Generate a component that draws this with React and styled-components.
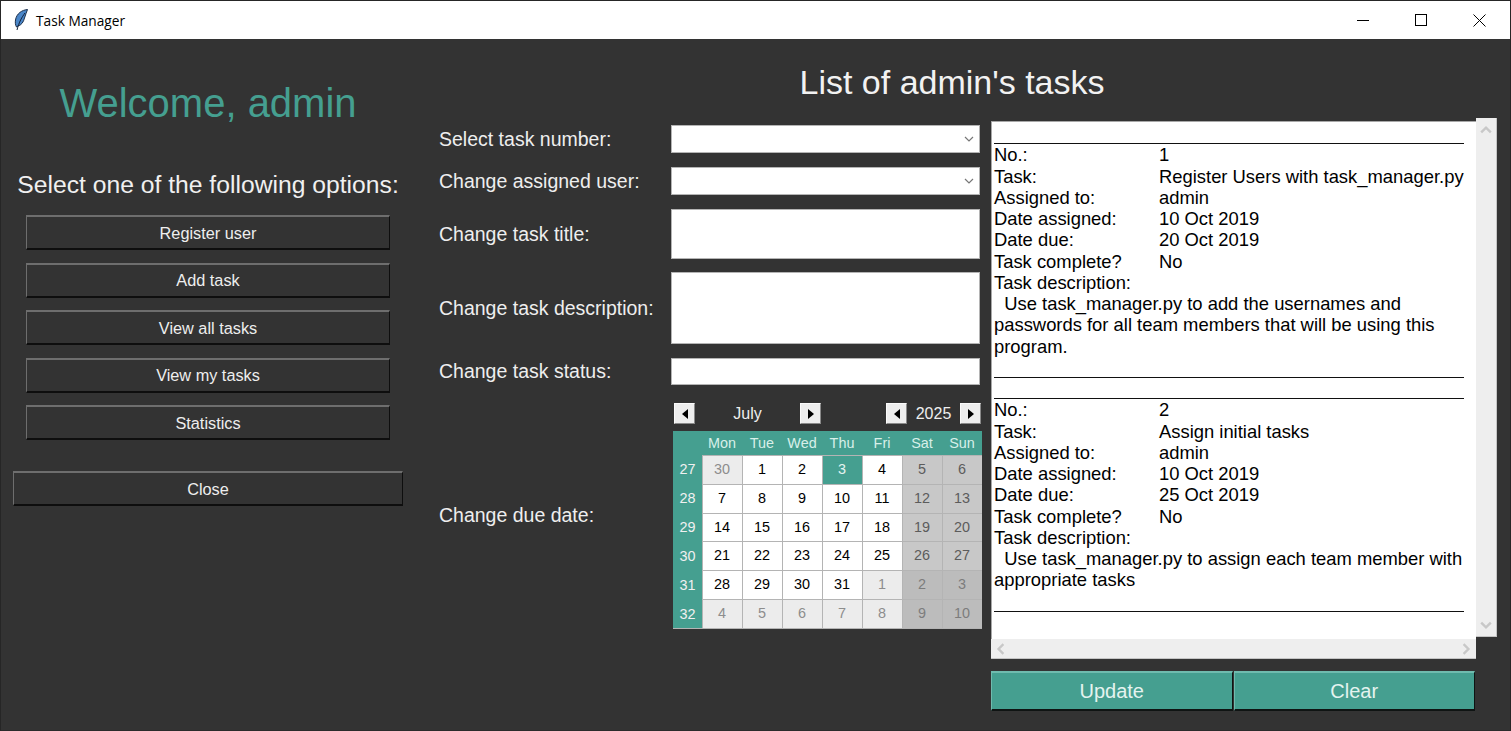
import styled, { createGlobalStyle } from "styled-components";

const teal = "#459f90";
const tasks = [
  {
    no: "1",
    task: "Register Users with task_manager.py",
    assigned: "10 Oct 2019",
    due: "20 Oct 2019",
    description: "  Use task_manager.py to add the usernames and passwords for all team members that will be using this program.",
  },
  {
    no: "2",
    task: "Assign initial tasks",
    assigned: "10 Oct 2019",
    due: "25 Oct 2019",
    description: "  Use task_manager.py to assign each team member with appropriate tasks",
  },
];
const days = ["Mon", "Tue", "Wed", "Thu", "Fri", "Sat", "Sun"];
const weeks = [
  { no: 27, first: 30 },
  { no: 28, first: 7 },
  { no: 29, first: 14 },
  { no: 30, first: 21 },
  { no: 31, first: 28 },
  { no: 32, first: 4 },
];

const GlobalStyle = createGlobalStyle`
  html, body {
    margin: 0;
    padding: 0;
    background: #333333;
    overflow: hidden;
  }
  * {
    box-sizing: border-box;
  }
`;

const Window = styled.div`
  width: 1511px;
  height: 731px;
  display: flex;
  flex-direction: column;
  border: 1px solid #262626;
  border-bottom-color: #2b2b2b;
  background: #333333;
  font-family: "Liberation Sans", Arial, sans-serif;
  color: #eeeeee;
  overflow: hidden;
`;

const TitleBar = styled.div`
  height: 38px;
  flex: none;
  display: flex;
  align-items: center;
  background: #ffffff;
  color: #000000;
  padding-left: 13px;
`;

const AppName = styled.span`
  font-family: "Open Sans", sans-serif;
  font-size: 13.7px;
  margin-left: 8px;
`;

const Controls = styled.div`
  margin-left: auto;
  margin-right: 1px;
  display: flex;
`;

const ControlButton = styled.div`
  width: 58.5px;
  height: 38px;
  display: flex;
  align-items: center;
  justify-content: center;
`;

const Main = styled.div`
  flex: 1;
  display: flex;
`;

const Sidebar = styled.div`
  width: 414px;
  flex: none;
  display: flex;
  flex-direction: column;
  align-items: center;
  padding-top: 41px;
`;

const Welcome = styled.h1`
  margin: 0;
  font-size: 40px;
  line-height: 46px;
  font-weight: 400;
  color: ${teal};
`;

const Prompt = styled.h2`
  margin: 44px 0 15px;
  font-size: 24.7px;
  line-height: 30px;
  font-weight: 400;
  color: #f0f0f0;
`;

const MenuList = styled.div`
  display: flex;
  flex-direction: column;
  gap: 12.5px;
`;

const MenuButton = styled.button`
  width: ${(p) => p.$width}px;
  height: 35px;
  margin-top: ${(p) => p.$top || 0}px;
  padding: 1px 0 0;
  background: #333333;
  color: #eeeeee;
  font-family: inherit;
  font-size: 16.3px;
  border: 1px solid;
  border-top: 2px solid #6e6e6e;
  border-left-color: #6e6e6e;
  border-right-color: #0e0e0e;
  border-bottom: 2px solid #0e0e0e;
`;

const Content = styled.div`
  flex: 1;
  padding: 23px 0 0 24px;
`;

const PageTitle = styled.h1`
  margin: 0 0 16px;
  width: 1026px;
  text-align: center;
  font-size: 34px;
  line-height: 40px;
  font-weight: 400;
  color: #f2f2f2;
`;

const Columns = styled.div`
  display: flex;
  gap: 9px;
`;

const Form = styled.div`
  width: 543px;
  padding-top: 7px;
  display: flex;
  flex-direction: column;
`;

const FormRow = styled.div`
  display: flex;
  align-items: center;
  margin-top: ${(p) => p.$top || 0}px;
`;

const Label = styled.label`
  width: 232px;
  flex: none;
  font-size: 19.5px;
  color: #eeeeee;
`;

const Field = styled.div`
  width: 309px;
  height: ${(p) => p.$height}px;
  display: flex;
  align-items: center;
  justify-content: flex-end;
  padding-right: 5px;
  background: #ffffff;
  border: 1px solid #b4b4b4;
`;

const CalendarWrap = styled.div`
  width: 309px;
  margin-left: 2px;
`;

const CalendarNav = styled.div`
  display: flex;
  justify-content: space-between;
  padding: 0 1px;
  margin-bottom: 7px;
`;

const NavGroup = styled.div`
  display: flex;
  align-items: center;
`;

const NavLabel = styled.span`
  width: ${(p) => p.$width}px;
  padding-top: 1px;
  text-align: center;
  font-size: 16px;
  color: #eeeeee;
`;

const NavButton = styled.div`
  width: 21px;
  height: 21px;
  display: flex;
  align-items: center;
  justify-content: center;
  background: #eeeeee;
  border: 1px solid;
  border-color: #fbfbfb #8a8a8a #8a8a8a #fbfbfb;
`;

const Arrow = styled.span`
  width: 0;
  height: 0;
  border-top: 5px solid transparent;
  border-bottom: 5px solid transparent;
  border-left: ${(p) => (p.$right ? "6px solid #000" : "0")};
  border-right: ${(p) => (p.$right ? "0" : "6px solid #000")};
`;

const CalendarGrid = styled.div`
  display: grid;
  grid-template-columns: 29px repeat(7, 40px);
  grid-template-rows: 24px repeat(6, 28.83px);
  background: ${teal};
  border-bottom: 1px solid #b4b4b4;
  font-size: 14.4px;
`;

const HeadCell = styled.div`
  display: flex;
  align-items: center;
  justify-content: center;
  color: #d8efe9;
`;

const WeekCell = styled(HeadCell)`
  color: #f0f0f0;
`;

const dayBackground = (p) => {
  if (p.$selected) return teal;
  if (p.$weekend) return p.$other ? "#bcbcbc" : "#c8c8c8";
  return p.$other ? "#ececec" : "#ffffff";
};

const dayColor = (p) => {
  if (p.$selected) return "#e6f4f1";
  if (p.$other) return p.$weekend ? "#7c7c7c" : "#8d8d8d";
  return p.$weekend ? "#5c5c5c" : "#000000";
};

const DayCell = styled.div`
  display: flex;
  align-items: center;
  justify-content: center;
  padding: 0 1px 2px 0;
  border-top: 1px solid #b4b4b4;
  border-left: 1px solid #b4b4b4;
  background: ${dayBackground};
  color: ${dayColor};
`;

const Output = styled.div`
  display: grid;
  grid-template-columns: 485px 21px;
`;

const TextPanel = styled.div`
  height: 518px;
  margin-top: 3px;
  padding: 1px 4px 0 2px;
  background: #ffffff;
  border-top: 1px solid #a8a8a8;
  border-left: 1px solid #a8a8a8;
  color: #000000;
  font-size: 18.4px;
  line-height: 21.25px;
  overflow: hidden;
`;

const Rule = styled.div`
  height: 21.25px;
  width: 470px;
  border-bottom: 1px solid #111111;
`;

const InfoRow = styled.div`
  display: grid;
  grid-template-columns: 165px 1fr;
`;

const Description = styled.div`
  white-space: pre-wrap;
`;

const BlankLine = styled.div`
  height: 21.25px;
`;

const VerticalBar = styled.div`
  height: 519px;
  display: flex;
  flex-direction: column;
  align-items: center;
  justify-content: space-between;
  padding: 6px 0 5px;
  background: #eeeeee;
  border-right: 1px solid #c4c4c4;
  border-bottom: 1px solid #c4c4c4;
`;

const HorizontalBar = styled.div`
  height: 20px;
  display: flex;
  align-items: center;
  justify-content: space-between;
  padding: 0 4px;
  background: #eeeeee;
  border-bottom: 1px solid #c4c4c4;
`;

const ActionRow = styled.div`
  grid-column: 1;
  display: flex;
  gap: 1px;
  margin-top: 12px;
  padding-right: 1px;
`;

const ActionButton = styled.button`
  flex: 1;
  height: 40px;
  padding: 1px 0 0;
  background: ${teal};
  color: #e4f3ef;
  font-family: inherit;
  font-size: 20px;
  border: 1px solid;
  border-top: 2px solid #6fbbae;
  border-left-color: #6fbbae;
  border-right-color: #0f1413;
  border-bottom: 2px solid #0f1413;
`;

const Feather = () => (
  <svg width="14" height="22" viewBox="0 0 14 22">
    <path d="M13.500 .5C8 1 2.500 4.500 1.500 11c-.4 2.500-.2 5 1 7l1.500-1c3.500-1 5.500-4 6.500-8 1-3 2-6 3-8.500z" fill="#4a86c8" stroke="#1c2f4a" strokeWidth="1" />
    <path d="M11 4C8 8 5 13 3 21" fill="none" stroke="#10203a" strokeWidth="1" />
  </svg>
);

const Chevron = ({ size = 10, rotate = 0, color = "#777", weight = 1.2 }) => (
  <svg width={size} height={size} viewBox="0 0 10 10" style={{ transform: `rotate(${rotate}deg)` }}>
    <path d="M1 3l4 4 4-4" fill="none" stroke={color} strokeWidth={weight} />
  </svg>
);

const TaskBlock = ({ item }) => (
  <>
    <InfoRow><span>No.:</span><span>{item.no}</span></InfoRow>
    <InfoRow><span>Task:</span><span>{item.task}</span></InfoRow>
    <InfoRow><span>Assigned to:</span><span>admin</span></InfoRow>
    <InfoRow><span>Date assigned:</span><span>{item.assigned}</span></InfoRow>
    <InfoRow><span>Date due:</span><span>{item.due}</span></InfoRow>
    <InfoRow><span>Task complete?</span><span>No</span></InfoRow>
    <InfoRow><span>Task description:</span></InfoRow>
    <Description>{item.description}</Description>
  </>
);

const WeekRow = ({ week, row }) => {
  const cells = [];
  for (let i = 0; i < 7; i++) {
    // july 2025 has 31 days, june 30
    let n = week.first + i;
    let other = row === 5;
    if (row === 0) {
      n = i === 0 ? 30 : i;
      other = i === 0;
    }
    if (row === 4 && n > 31) {
      n -= 31;
      other = true;
    }
    cells.push(
      <DayCell key={i} $other={other} $weekend={i > 4} $selected={row === 0 && i === 3}>
        {n}
      </DayCell>
    );
  }
  return (
    <>
      <WeekCell>{week.no}</WeekCell>
      {cells}
    </>
  );
};

const Calendar = () => (
  <CalendarWrap>
    <CalendarNav>
      <NavGroup>
        <NavButton><Arrow /></NavButton>
        <NavLabel $width={105}>July</NavLabel>
        <NavButton><Arrow $right /></NavButton>
      </NavGroup>
      <NavGroup>
        <NavButton><Arrow /></NavButton>
        <NavLabel $width={53}>2025</NavLabel>
        <NavButton><Arrow $right /></NavButton>
      </NavGroup>
    </CalendarNav>
    <CalendarGrid>
      <HeadCell />
      {days.map((d) => (
        <HeadCell key={d}>{d}</HeadCell>
      ))}
      {weeks.map((w, row) => (
        <WeekRow key={w.no} week={w} row={row} />
      ))}
    </CalendarGrid>
  </CalendarWrap>
);

const App = () => (
  <>
    <GlobalStyle />
    <Window>
      <TitleBar>
        <Feather />
        <AppName>Task Manager</AppName>
        <Controls>
          <ControlButton>
            <svg width="12" height="12" viewBox="0 0 12 12"><path d="M0 6.500h12" stroke="#000" /></svg>
          </ControlButton>
          <ControlButton>
            <svg width="12" height="12" viewBox="0 0 12 12"><rect x=".5" y=".5" width="11" height="11" fill="none" stroke="#000" /></svg>
          </ControlButton>
          <ControlButton>
            <svg width="13" height="13" viewBox="0 0 13 13"><path d="M.5.500l12 12M12.500.500l-12 12" stroke="#000" /></svg>
          </ControlButton>
        </Controls>
      </TitleBar>
      <Main>
        <Sidebar>
          <Welcome>Welcome, admin</Welcome>
          <Prompt>Select one of the following options:</Prompt>
          <MenuList>
            <MenuButton $width={364}>Register user</MenuButton>
            <MenuButton $width={364}>Add task</MenuButton>
            <MenuButton $width={364}>View all tasks</MenuButton>
            <MenuButton $width={364}>View my tasks</MenuButton>
            <MenuButton $width={364}>Statistics</MenuButton>
          </MenuList>
          <MenuButton $width={390} $top={31}>Close</MenuButton>
        </Sidebar>
        <Content>
          <PageTitle>List of admin's tasks</PageTitle>
          <Columns>
            <Form>
              <FormRow>
                <Label>Select task number:</Label>
                <Field $height={28}><Chevron /></Field>
              </FormRow>
              <FormRow $top={14}>
                <Label>Change assigned user:</Label>
                <Field $height={28}><Chevron /></Field>
              </FormRow>
              <FormRow $top={14}>
                <Label>Change task title:</Label>
                <Field $height={50} />
              </FormRow>
              <FormRow $top={13}>
                <Label>Change task description:</Label>
                <Field $height={72} />
              </FormRow>
              <FormRow $top={14}>
                <Label>Change task status:</Label>
                <Field $height={27} />
              </FormRow>
              <FormRow $top={18}>
                <Label>Change due date:</Label>
                <Calendar />
              </FormRow>
            </Form>
            <Output>
              <TextPanel>
                <Rule />
                <TaskBlock item={tasks[0]} />
                <Rule />
                <Rule />
                <TaskBlock item={tasks[1]} />
                <Rule />
                <BlankLine />
              </TextPanel>
              <VerticalBar>
                <Chevron size={12} rotate={180} color="#c8c8c8" weight={2} />
                <Chevron size={12} color="#c8c8c8" weight={2} />
              </VerticalBar>
              <HorizontalBar>
                <Chevron size={12} rotate={90} color="#c8c8c8" weight={2} />
                <Chevron size={12} rotate={-90} color="#c8c8c8" weight={2} />
              </HorizontalBar>
              <ActionRow>
                <ActionButton>Update</ActionButton>
                <ActionButton>Clear</ActionButton>
              </ActionRow>
            </Output>
          </Columns>
        </Content>
      </Main>
    </Window>
  </>
);

export default App;
